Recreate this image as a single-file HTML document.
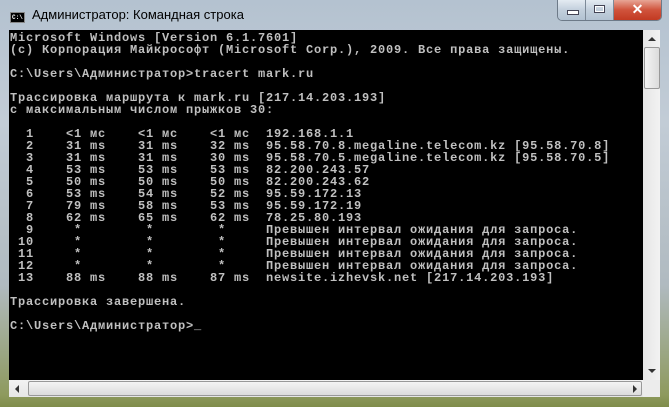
<!DOCTYPE html>
<html><head><meta charset="utf-8"><style>
html,body{margin:0;padding:0;width:669px;height:407px;overflow:hidden;}
body{background:linear-gradient(180deg,#b4c2d0 0%,#c2ccd6 30%,#b0bac0 70%,#8e9a5e 97%,#7f8c4a 100%);position:relative;font-family:"Liberation Sans",sans-serif;}
.title{position:absolute;left:32px;top:7px;font-size:13px;color:#000;font-family:"Liberation Sans","Noto Sans CJK JP",sans-serif;}
.icon{position:absolute;left:10px;top:12px;width:15px;height:11px;background:#000;border:1px solid #888;box-sizing:border-box;color:#fff;font:bold 6px "Liberation Mono",monospace;line-height:9px;padding-left:1px;}
.btns{position:absolute;left:557px;top:0;width:103px;height:20px;border:1px solid #6d7a88;border-top:none;border-radius:0 0 5px 5px;overflow:hidden;display:flex;}
.b{height:20px;background:linear-gradient(#e4ebf2,#c2cfdc 50%,#b2c2d2);border-right:1px solid #7d8a98;position:relative;}
.cl{flex:1;background:linear-gradient(#e7a596,#d0533c 50%,#c23a22);border:none;color:#fff;text-align:center;font:bold 14px "Liberation Sans",sans-serif;line-height:19px;}
.con{position:absolute;left:9px;top:30px;width:634px;height:350px;background:#000;}
pre{margin:0;position:absolute;left:1px;top:2px;font-family:"Liberation Mono","DejaVu Sans Mono",monospace;font-size:12px;letter-spacing:0.8px;line-height:12px;color:#c0c0c0;font-weight:bold;}
.vs{position:absolute;left:643px;top:30px;width:17px;height:350px;background:linear-gradient(90deg,#e6e6e6,#f2f2f2);}
.hs{position:absolute;left:9px;top:380px;width:634px;height:17px;background:linear-gradient(#f2f2f2,#e6e6e6);}
.corner{position:absolute;left:643px;top:380px;width:17px;height:17px;background:#ececec;}
.thumb{position:absolute;left:1px;top:17px;width:14px;height:40px;border:1px solid #999;border-radius:2px;background:linear-gradient(90deg,#f4f4f4,#dcdcdc);}
.hthumb{position:absolute;left:19px;top:1px;width:612px;height:13px;border:1px solid #999;border-radius:2px;background:linear-gradient(#f4f4f4,#dcdcdc);}
</style></head><body>
<div class="icon">C:\</div>
<div class="title">Администратор: Командная строка</div>
<div class="btns">
<div class="b" style="width:27px"><div style="position:absolute;left:9px;top:10px;width:10px;height:3px;background:#fff;border:1px solid #445"></div></div>
<div class="b" style="width:27px"><div style="position:absolute;left:8px;top:5px;width:9px;height:6px;border:1px solid #445;box-shadow:inset 0 0 0 1px #fff"></div></div>
<div class="cl">✕</div>
</div>
<div class="con"><pre>Microsoft Windows [Version 6.1.7601]
(c) Корпорация Майкрософт (Microsoft Corp.), 2009. Все права защищены.

C:\Users\Администратор&gt;tracert mark.ru

Трассировка маршрута к mark.ru [217.14.203.193]
с максимальным числом прыжков 30:

  1    &lt;1 мс    &lt;1 мс    &lt;1 мс  192.168.1.1
  2    31 ms    31 ms    32 ms  95.58.70.8.megaline.telecom.kz [95.58.70.8]
  3    31 ms    31 ms    30 ms  95.58.70.5.megaline.telecom.kz [95.58.70.5]
  4    53 ms    53 ms    53 ms  82.200.243.57
  5    50 ms    50 ms    50 ms  82.200.243.62
  6    53 ms    54 ms    52 ms  95.59.172.13
  7    79 ms    58 ms    53 ms  95.59.172.19
  8    62 ms    65 ms    62 ms  78.25.80.193
  9     *        *        *     Превышен интервал ожидания для запроса.
 10     *        *        *     Превышен интервал ожидания для запроса.
 11     *        *        *     Превышен интервал ожидания для запроса.
 12     *        *        *     Превышен интервал ожидания для запроса.
 13    88 ms    88 ms    87 ms  newsite.izhevsk.net [217.14.203.193]

Трассировка завершена.

C:\Users\Администратор&gt;_</pre></div>
<div class="vs"><div style="position:absolute;left:5px;top:7px;width:0;height:0;border-left:4px solid transparent;border-right:4px solid transparent;border-bottom:4px solid #333"></div><div class="thumb"></div><div style="position:absolute;left:5px;top:339px;width:0;height:0;border-left:4px solid transparent;border-right:4px solid transparent;border-top:4px solid #333"></div></div>
<div class="hs"><div style="position:absolute;left:6px;top:5px;border-top:4px solid transparent;border-bottom:4px solid transparent;border-right:4px solid #333"></div><div class="hthumb"></div><div style="position:absolute;left:624px;top:5px;border-top:4px solid transparent;border-bottom:4px solid transparent;border-left:4px solid #333"></div></div>
<div class="corner"></div>
</body></html>
